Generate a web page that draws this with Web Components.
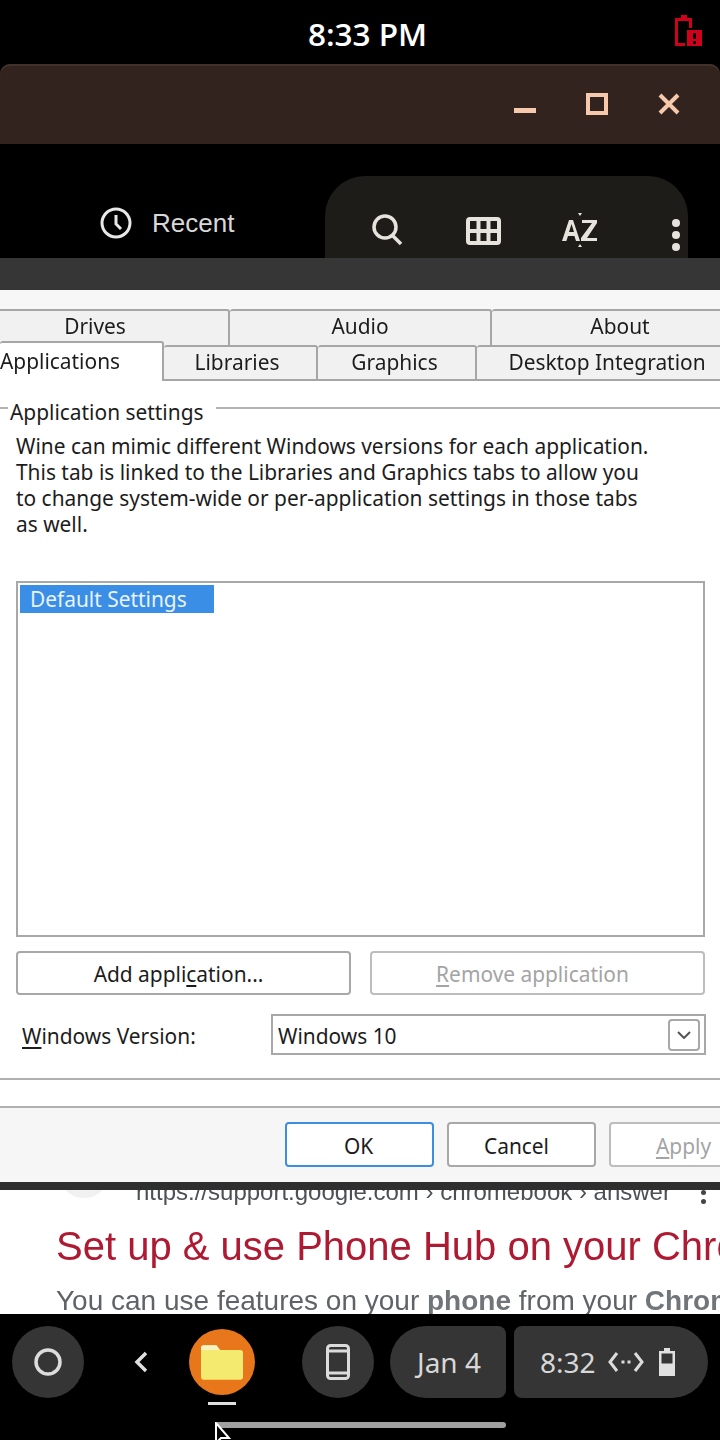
<!DOCTYPE html>
<html>
<head>
<meta charset="utf-8">
<style>
    html, body { margin: 0; padding: 0; background: #000; }
    body { width: 720px; height: 1440px; overflow: hidden; font-family: "Liberation Sans", sans-serif; }
    #screen { position: relative; display: flex; flex-direction: column; width: 720px; height: 1440px; overflow: hidden; filter: blur(0.45px); }
</style>
</head>
<body>
<div id="screen">
    <status-bar></status-bar>
    <window-titlebar></window-titlebar>
    <files-header></files-header>
    <wine-dialog>
        <wine-tabs></wine-tabs>
        <app-settings></app-settings>
        <dialog-actions></dialog-actions>
    </wine-dialog>
    <web-peek></web-peek>
    <chrome-shelf></chrome-shelf>
</div>
<script>
class StatusBar extends HTMLElement {
    connectedCallback() {
        this.attachShadow({ mode: 'open' }).innerHTML = `
            <style>
                :host { display: flex; position: relative; height: 64px; background: #000; align-items: center; justify-content: center; flex: none; }
                span { color: #fff; font: 600 31.500px/1 "Open Sans", sans-serif; margin: 4px 0 0 15px; }
                svg { position: absolute; left: 672px; top: 14px; }
            </style>
            <span>8:33 PM</span>
            <svg width="32" height="34" viewBox="0 0 32 34">
                <path d="M9 1h6v3h5v10h-3V7H6v22h7v3H3V4h6z" fill="#d0021b"/>
                <path d="M15 16h15v16H15z" fill="#d0021b"/>
                <path d="M21 19h3v6h-3zM21 27h3v3h-3z" fill="#000"/>
            </svg>`;
    }
}

class WindowTitlebar extends HTMLElement {
    connectedCallback() {
        this.attachShadow({ mode: 'open' }).innerHTML = `
            <style>
                :host { display: flex; height: 80px; flex: none; background: #33231e; border-radius: 10px 10px 0 0; box-shadow: inset 0 2px 0 #41312c; justify-content: flex-end; }
                .btns { display: flex; padding: 29px 40px 0 0; gap: 50px; }
                svg { display: block; }
            </style>
            <div class="btns">
                <svg width="22" height="22" viewBox="0 0 22 22"><rect x="0" y="15" width="22" height="5" fill="#f6c9ad"/></svg>
                <svg width="22" height="22" viewBox="0 0 22 22"><path d="M2 2h18v18H2z" fill="none" stroke="#f6c9ad" stroke-width="4"/></svg>
                <svg width="22" height="22" viewBox="0 0 22 22"><path d="M2 2l18 18M20 2L2 20" fill="none" stroke="#f6c9ad" stroke-width="4"/></svg>
            </div>`;
    }
}

class FilesHeader extends HTMLElement {
    connectedCallback() {
        this.attachShadow({ mode: 'open' }).innerHTML = `
            <style>
                :host { display: flex; height: 114px; flex: none; background: #000; box-sizing: border-box; padding-top: 32px; }
                .recent { display: flex; align-items: flex-start; width: 325px; box-sizing: border-box; padding: 31px 0 0 100px; color: #d8d8d8; font: 26px/32px "Liberation Sans", sans-serif; gap: 20px; }
                .panel { display: flex; width: 363px; background: #1e1c19; border-radius: 40px 40px 0 0; box-sizing: border-box; padding-top: 38px; align-items: flex-start; color: #e6e2dc; }
                svg { display: block; flex: none; }
                .search { margin-left: 46px; }
                .grid { margin-left: 63px; margin-top: 3px; }
                .az { margin-left: 61px; margin-top: -2px; }
                .dots { margin-left: 74px; margin-top: 5px; }
            </style>
            <div class="recent">
                <svg width="32" height="32" viewBox="0 0 32 32" fill="none" stroke="#e8e8e8" stroke-width="3"><circle cx="16" cy="16" r="14"/><path d="M16 8v9l5 5"/></svg>
                <span>Recent</span>
            </div>
            <div class="panel">
                <svg class="search" width="32" height="32" viewBox="0 0 32 32" fill="none" stroke="#e6e2dc" stroke-width="3.500"><circle cx="14" cy="13" r="11"/><path d="M22 22l8 8"/></svg>
                <svg class="grid" width="35" height="28" viewBox="0 0 35 28" fill="none" stroke="#e6e2dc" stroke-width="4"><rect x="2" y="2" width="31" height="24" rx="2"/><path d="M2 14h31M12.500 2v24M22.500 2v24"/></svg>
                <svg class="az" width="36" height="36" viewBox="0 0 36 36" fill="#e6e2dc"><path d="M16 1h4l-2 3zM16 35h4l-2-3z"/><path d="M0 29L7 8h4l7 21h-4l-1.600-5H6l-1.600 5zM7 20h5L9.500 12zM20 8h15v3L25 26h10v3H19v-3L30 11H20z"/></svg>
                <svg class="dots" width="8" height="32" viewBox="0 0 8 32" fill="#e6e2dc"><circle cx="4" cy="4" r="4"/><circle cx="4" cy="16" r="4"/><circle cx="4" cy="28" r="4"/></svg>
            </div>`;
    }
}

class WineDialog extends HTMLElement {
    connectedCallback() {
        this.attachShadow({ mode: 'open' }).innerHTML = `
            <style>
                :host { display: flex; flex-direction: column; flex: none; height: 932px; box-sizing: border-box; border-top: 32px solid #363636; border-bottom: 8px solid #2e2e2e; background: #fff; color: #1c1c1c; font: 20.900px "Noto Sans", sans-serif; }
            </style>
            <slot></slot>`;
    }
}

class WineTab extends HTMLElement {
    connectedCallback() {
        this.attachShadow({ mode: 'open' }).innerHTML = `
            <style>
                :host { display: flex; align-items: center; justify-content: center; box-sizing: border-box; background: #f1f1f1; border: 2px solid #a6a6a6; border-left-width: 0; border-radius: 3px 3px 0 0; flex: none; white-space: nowrap; }
                :host([active]) { background: #fff; height: 44px; margin-top: -4px; border-bottom: 0; justify-content: flex-start; padding-bottom: 6px; position: relative; }
            </style>
            <slot></slot>`;
    }
}

class WineTabs extends HTMLElement {
    connectedCallback() {
        this.attachShadow({ mode: 'open' }).innerHTML = `
            <style>
                :host { display: block; flex: none; height: 91px; padding-top: 19px; box-sizing: border-box; background: #f7f7f7; overflow: hidden; }
                .row { display: flex; height: 36px; }
                .top wine-tab { border-bottom: 0; padding-bottom: 4px; }
            </style>
            <div class="row top">
                <wine-tab style="width:268px;margin-left:-38px">Drives</wine-tab>
                <wine-tab style="width:262px">Audio</wine-tab>
                <wine-tab style="width:258px">About</wine-tab>
            </div>
            <div class="row">
                <wine-tab active style="width:164px">Applications</wine-tab>
                <wine-tab style="width:154px;padding:0 6px 2px 0">Libraries</wine-tab>
                <wine-tab style="width:159px;padding:0 4px 2px 0">Graphics</wine-tab>
                <wine-tab style="width:262px;padding-bottom:2px">Desktop Integration</wine-tab>
            </div>`;
    }
}

class WineButton extends HTMLElement {
    connectedCallback() {
        this.attachShadow({ mode: 'open' }).innerHTML = `
            <style>
                :host { display: flex; align-items: center; justify-content: center; box-sizing: border-box; background: #fff; border: 2px solid #a8a8a8; border-radius: 4px; flex: none; padding: 2px 10px 0 0; }
                :host([disabled]) { color: #a4a4a4; border-color: #bdbdbd; }
                :host([default]) { border-color: #3d8ee0; padding-right: 2px; }
            </style>
            <slot></slot>`;
    }
}

class AppSettings extends HTMLElement {
    connectedCallback() {
        this.attachShadow({ mode: 'open' }).innerHTML = `
            <style>
                :host { display: block; flex: none; height: 699px; box-sizing: border-box; background: #fff; padding-top: 19px; border-bottom: 2px solid #b0b0b0; }
                u { text-underline-offset: 3px; }
                .group { display: flex; align-items: center; height: 24px; }
                .group i { display: block; height: 2px; background: #b4b4b4; margin-bottom: 8px; }
                .group i:first-child { width: 8px; margin-right: 2px; }
                .group i:last-child { flex: 1; margin-left: 12px; }
                p { margin: 9px 0 0 16px; line-height: 26px; white-space: nowrap; height: 104px; }
                .list { box-sizing: border-box; margin: 44px 15px 0 16px; height: 356px; border: 2px solid #a8a8a8; padding: 2px; }
                .sel { width: 194px; height: 28px; background: #3a8ee6; color: #e9f3fc; line-height: 28px; padding-left: 10px; box-sizing: border-box; }
                .btns { display: flex; gap: 19px; margin: 14px 15px 0 16px; height: 44px; }
                .btns wine-button { width: 335px; }
                .ver { display: flex; align-items: center; margin: 19px 14px 0 22px; height: 41px; }
                .ver span { width: 249px; flex: none; padding-top: 2px; }
                .combo { flex: 1; display: flex; align-items: center; justify-content: space-between; height: 41px; box-sizing: border-box; border: 2px solid #a8a8a8; padding: 0 4px 0 5px; }
                .combo b { font-weight: 400; padding-top: 2px; }
                .arrow { display: flex; align-items: center; justify-content: center; width: 32px; height: 32px; box-sizing: border-box; border: 2px solid #a8a8a8; border-radius: 4px; }
            </style>
            <div class="group"><i></i><span>Application settings</span><i></i></div>
            <p>Wine can mimic different Windows versions for each application.<br>This tab is linked to the Libraries and Graphics tabs to allow you<br>to change system-wide or per-application settings in those tabs<br>as well.</p>
            <div class="list"><div class="sel">Default Settings</div></div>
            <div class="btns">
                <wine-button>Add appli<u>c</u>ation...</wine-button>
                <wine-button disabled><span><u>R</u>emove application</span></wine-button>
            </div>
            <div class="ver">
                <span><u>W</u>indows Version:</span>
                <div class="combo"><b>Windows 10</b>
                    <div class="arrow"><svg width="14" height="8" viewBox="0 0 14 8" fill="none" stroke="#555" stroke-width="2"><path d="M1 1l6 6 6-6"/></svg></div>
                </div>
            </div>`;
    }
}

class DialogActions extends HTMLElement {
    connectedCallback() {
        this.attachShadow({ mode: 'open' }).innerHTML = `
            <style>
                :host { display: block; flex: none; height: 102px; box-sizing: border-box; padding-top: 26px; background: #fff; overflow: hidden; }
                .bar { display: flex; gap: 13px; height: 76px; box-sizing: border-box; padding: 14px 0 0 285px; background: #f6f6f6; border-top: 2px solid #b0b0b0; }
                wine-button { width: 149px; height: 45px; padding-top: 2px; }
                u { text-underline-offset: 3px; }
            </style>
            <div class="bar">
                <wine-button default>OK</wine-button>
                <wine-button>Cancel</wine-button>
                <wine-button disabled style="width:149px;flex:none;padding-right:0"><span><u>A</u>pply</span></wine-button>
            </div>`;
    }
}

class WebPeek extends HTMLElement {
    connectedCallback() {
        this.attachShadow({ mode: 'open' }).innerHTML = `
            <style>
                :host { display: block; flex: none; position: relative; height: 124px; background: #fff; overflow: hidden; white-space: nowrap; font-family: "Liberation Sans", sans-serif; }
                .fav { position: absolute; left: 62px; top: -28px; width: 44px; height: 36px; border-radius: 50%; background: #f1f1f1; }
                .url { margin: -12px 0 0 136px; font-size: 24px; line-height: 28px; color: #4d5156; display: flex; }
                .more { position: absolute; left: 701px; top: 0; width: 6px; }
                .more i { display: block; width: 5px; height: 5px; border-radius: 50%; background: #444; margin-bottom: 4px; }
                h3 { margin: 16px 0 0 56px; font: 400 40px/48px "Liberation Sans", sans-serif; color: #ae1a32; }
                p { margin: 15px 0 0 56px; font-size: 28px; line-height: 32px; color: #5f6368; }
                b { color: #70757a; }
            </style>
            <div class="fav"></div>
            <div class="url">https://support.google.com › chromebook › answer</div>
            <div class="more"><i></i><i></i></div>
            <h3>Set up &amp; use Phone Hub on your Chromebook</h3>
            <p>You can use features on your <b>phone</b> from your <b>Chromebook</b></p>`;
    }
}

class ChromeShelf extends HTMLElement {
    connectedCallback() {
        this.attachShadow({ mode: 'open' }).innerHTML = `
            <style>
                :host { display: block; flex: none; position: relative; height: 126px; background: #000; color: #d8d8d8; font: 28px "Noto Sans", sans-serif; }
                .row { display: flex; align-items: center; height: 72px; padding: 12px 0 0 12px; }
                .round { width: 72px; height: 72px; border-radius: 50%; background: #353535; display: flex; align-items: center; justify-content: center; flex: none; }
                .chev { margin-left: 49px; }
                .app { margin-left: 40px; width: 66px; height: 66px; border-radius: 50%; background: #e8761a; display: flex; align-items: center; justify-content: center; flex: none; }
                .phone { margin-left: 47px; }
                .date { margin-left: 16px; width: 116px; height: 72px; background: #353535; border-radius: 36px 8px 8px 36px; display: flex; align-items: center; justify-content: center; box-sizing: border-box; padding-left: 2px; flex: none; }
                .time { margin-left: 8px; width: 194px; height: 72px; background: #353535; border-radius: 8px 36px 36px 8px; display: flex; align-items: center; box-sizing: border-box; padding-left: 26px; gap: 14px; flex: none; }
                .dot { width: 28px; height: 3px; background: #e0e0e0; margin: 4px 0 0 208px; }
                .home { width: 291px; height: 6px; background: #a0a0a0; border-radius: 3px; margin: 17px 0 0 215px; }
                .cursor { position: absolute; left: 215px; top: 108px; }
            </style>
            <div class="row">
                <div class="round"><svg width="30" height="30" viewBox="0 0 30 30"><circle cx="15" cy="15" r="12" fill="none" stroke="#dcdcdc" stroke-width="3.500"/></svg></div>
                <svg class="chev" width="16" height="22" viewBox="0 0 16 22" fill="none" stroke="#e0e0e0" stroke-width="3.500"><path d="M13 2L4 11l9 9"/></svg>
                <div class="app"><svg width="42" height="35" viewBox="0 0 44 36"><path d="M0 3a3 3 0 0 1 3-3h13l4 5h21a3 3 0 0 1 3 3v25a3 3 0 0 1-3 3H3a3 3 0 0 1-3-3z" fill="#f4ea6f"/><path d="M0 3a3 3 0 0 1 3-3h13l4 5H0z" fill="#f7f3c0"/></svg></div>
                <div class="round phone"><svg width="24" height="36" viewBox="0 0 24 36"><rect x="1.500" y="1.500" width="21" height="33" rx="3" fill="none" stroke="#dcdcdc" stroke-width="3"/><path d="M2 7h20M2 29h20" stroke="#dcdcdc" stroke-width="3"/></svg></div>
                <div class="date">Jan 4</div>
                <div class="time"><span>8:32</span>
                    <svg width="36" height="22" viewBox="0 0 36 22" fill="none" stroke="#dcdcdc" stroke-width="3" style="margin-left:-2px"><path d="M9 2L2 11l7 9M27 2l7 9-7 9"/><path d="M13.500 11h3M19.500 11h3"/></svg>
                    <svg width="16" height="28" viewBox="0 0 16 28" style="margin-left:1px"><path d="M5 0h6v3h5v25H0V3h5z" fill="#e0e0e0"/><rect x="2.500" y="5.500" width="11" height="10" fill="#353535"/></svg>
                </div>
            </div>
            <div class="dot"></div>
            <div class="home"></div>
            <svg class="cursor" width="24" height="18" viewBox="0 0 24 18"><path d="M1 1v20l5-5h8z" fill="#000" stroke="#fff" stroke-width="2"/></svg>`;
    }
}

customElements.define('status-bar', StatusBar);
customElements.define('window-titlebar', WindowTitlebar);
customElements.define('files-header', FilesHeader);
customElements.define('wine-dialog', WineDialog);
customElements.define('wine-tab', WineTab);
customElements.define('wine-tabs', WineTabs);
customElements.define('wine-button', WineButton);
customElements.define('app-settings', AppSettings);
customElements.define('dialog-actions', DialogActions);
customElements.define('web-peek', WebPeek);
customElements.define('chrome-shelf', ChromeShelf);
</script>
</body>
</html>
